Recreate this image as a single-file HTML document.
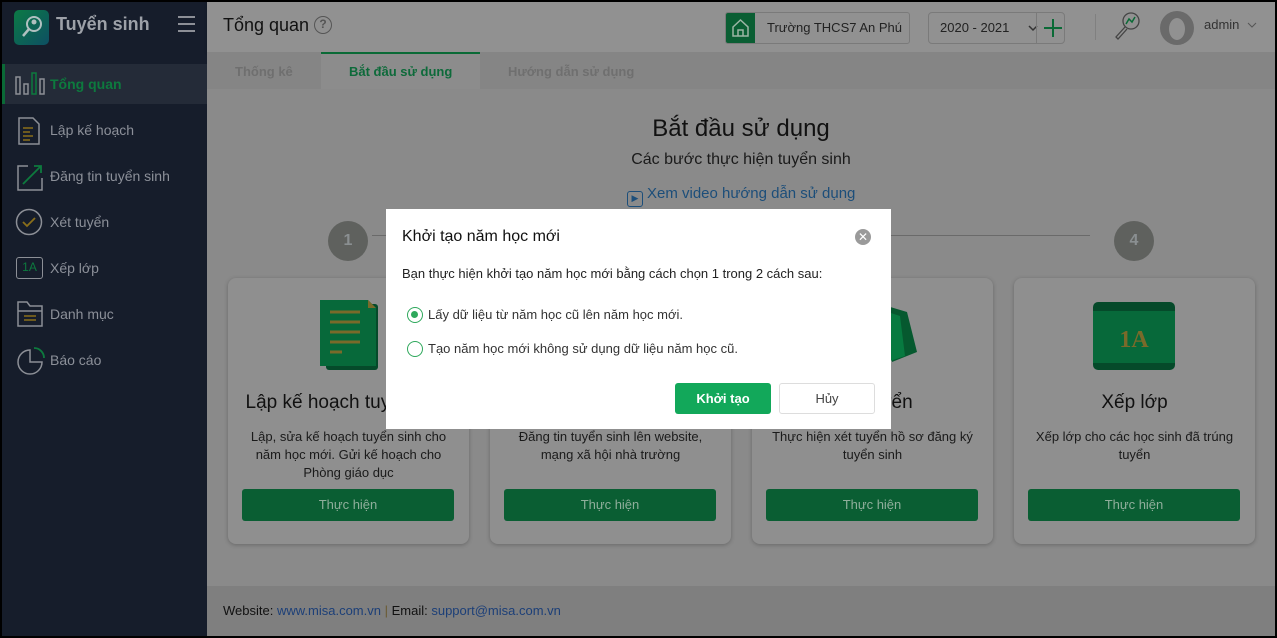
<!DOCTYPE html>
<html><head><meta charset="utf-8"><style>
*{box-sizing:border-box;margin:0;padding:0}
body{width:1277px;height:638px;overflow:hidden;font-family:"Liberation Sans","DejaVu Sans",sans-serif;background:#000;position:relative}
.abs{position:absolute}
#side{left:2px;top:2px;width:205px;height:634px;background:#161d2b}
#main{left:207px;top:2px;width:1068px;height:634px;background:#8a8a8a}
.nav{position:absolute;left:0;width:205px;height:46px;color:#8c9099;font-size:14px;display:flex;align-items:center}
.nav span{position:absolute;left:48px}
.card{position:absolute;top:276px;width:241px;height:266px;background:#8f8f8f;border-radius:8px;box-shadow:0 1px 4px rgba(0,0,0,.25);text-align:center}
.card h3{position:absolute;top:114px;left:0;right:0;font-weight:normal;font-size:19px;color:#111}
.card p{position:absolute;top:150px;left:15px;right:15px;font-size:13px;line-height:18px;color:#1a1a1a}
.btn{position:absolute;left:14px;right:15px;top:211px;height:32px;background:#0a5e33;border-radius:3px;color:#8fae9b;font-size:13px;line-height:32px}
.circ{position:absolute;top:219px;width:40px;height:40px;border-radius:50%;background:#5f615e;color:#8a8f91;font-size:16px;text-align:center;line-height:40px;font-weight:bold}
</style></head><body>
<div id="side" class="abs">
 <div class="abs" style="left:12px;top:8px;width:35px;height:35px;border-radius:5px;background:linear-gradient(135deg,#0c7a45,#0d4f63)">
  <svg width="35" height="35"><circle cx="20" cy="14" r="7" fill="none" stroke="#b0c0c0" stroke-width="2"/><circle cx="20" cy="12" r="2.5" fill="#b0c0c0"/><line x1="15" y1="19" x2="9" y2="26" stroke="#b0c0c0" stroke-width="2.5"/></svg>
 </div>
 <div class="abs" style="left:54px;top:12px;font-size:18px;color:#9da1a8;font-weight:bold">Tuyển sinh</div>
 <div class="abs" style="left:176px;top:14px;width:17px;height:16px;border-top:2px solid #8c8f96;border-bottom:2px solid #8c8f96"><div style="margin-top:5px;height:2px;background:#8c8f96"></div></div>
 <div class="nav" style="top:62px;height:40px;background:#242b38;border-left:3px solid #0a6a36">
  <svg class="abs" style="left:10px;top:8px" width="34" height="24"><g fill="none" stroke="#8c8f96" stroke-width="1.5"><rect x="1" y="5" width="4" height="17"/><rect x="9" y="12" width="4" height="10"/><rect x="25" y="7" width="4" height="15"/></g><rect x="17" y="1" width="4" height="21" fill="none" stroke="#0d7a3e" stroke-width="1.5"/></svg>
  <span style="left:45px;color:#0d7a3e;font-weight:bold">Tổng quan</span></div>
 <div class="nav" style="top:105px"><svg class="abs" style="left:15px;top:10px" width="24" height="28"><path d="M2 1h14l6 6v20H2z" fill="none" stroke="#8c8f96" stroke-width="1.5"/><path d="M6 11h10M6 15h7M6 19h10M6 23h7" stroke="#8a6f1a" stroke-width="1.5"/></svg><span>Lập kế hoạch</span></div>
 <div class="nav" style="top:151px"><svg class="abs" style="left:14px;top:10px" width="28" height="28"><path d="M12 3H2v24h24V15" fill="none" stroke="#8c8f96" stroke-width="1.5"/><path d="M7 21L25 3M18 3h7v7" fill="none" stroke="#0d7a3e" stroke-width="1.8"/></svg><span>Đăng tin tuyển sinh</span></div>
 <div class="nav" style="top:197px"><svg class="abs" style="left:13px;top:9px" width="30" height="30"><circle cx="14" cy="14" r="12.5" fill="none" stroke="#8c8f96" stroke-width="1.5"/><path d="M8 14l4 4 8-8" fill="none" stroke="#8a6f1a" stroke-width="1.8"/></svg><span>Xét tuyển</span></div>
 <div class="nav" style="top:243px"><div class="abs" style="left:14px;top:12px;width:27px;height:22px;border:1.5px solid #8c8f96;border-radius:3px;color:#0d7a3e;font-size:12px;text-align:center;line-height:19px">1A</div><span>Xếp lớp</span></div>
 <div class="nav" style="top:289px"><svg class="abs" style="left:15px;top:10px" width="26" height="26"><path d="M1 1h9l3 4h12v20H1z" fill="none" stroke="#8c8f96" stroke-width="1.5"/><path d="M1 10h24" stroke="#8c8f96" stroke-width="1.5"/><path d="M7 15h12M7 19h12" stroke="#8a6f1a" stroke-width="1.6"/></svg><span>Danh mục</span></div>
 <div class="nav" style="top:335px"><svg class="abs" style="left:15px;top:10px" width="28" height="28"><path d="M13 3a12 12 0 1 0 12 12H13z" fill="none" stroke="#8c8f96" stroke-width="1.5"/><path d="M17 1a10 10 0 0 1 10 10" fill="none" stroke="#0d7a3e" stroke-width="1.8"/></svg><span>Báo cáo</span></div>
</div>
<div id="main" class="abs">
 <div class="abs" style="left:0;top:0;width:1068px;height:50px;background:#919191;box-shadow:0 1px 3px rgba(0,0,0,.15)">
  <div class="abs" style="left:16px;top:13px;font-size:18px;color:#111">Tổng quan</div>
  <div class="abs" style="left:107px;top:14px;width:18px;height:18px;border:1.5px solid #555;border-radius:50%;font-size:12px;text-align:center;line-height:15px;color:#555;font-weight:bold">?</div>
  <div class="abs" style="left:518px;top:10px;width:185px;height:32px;border:1px solid #7a7a7a;border-radius:3px;overflow:hidden">
   <div style="position:absolute;left:0;top:0;width:29px;height:32px;background:#0a5e33"><svg width="29" height="30"><path d="M7 14l7.5-7 7.5 7v9H7z M12 23v-6h5v6" fill="none" stroke="#9cb5a5" stroke-width="1.5"/></svg></div>
   <div style="position:absolute;left:41px;top:7px;font-size:13px;color:#222">Trường THCS7 An Phú</div></div>
  <div class="abs" style="left:721px;top:10px;width:137px;height:32px;border:1px solid #7a7a7a;border-radius:4px">
   <div style="position:absolute;left:11px;top:7px;font-size:13px;color:#222">2020 - 2021</div>
   <svg style="position:absolute;left:98px;top:10px" width="12" height="10"><path d="M2 3l4 4 4-4" fill="none" stroke="#333" stroke-width="1.5"/></svg>
   <div style="position:absolute;left:107px;top:0;width:1px;height:30px;background:#7a7a7a"></div>
   <svg style="position:absolute;left:114px;top:5px" width="20" height="20"><path d="M10 1v18M1 10h18" stroke="#0a6a36" stroke-width="2"/></svg></div>
  <div class="abs" style="left:888px;top:12px;width:1px;height:26px;background:#808080"></div>
  <svg class="abs" style="left:905px;top:8px" width="30" height="32"><circle cx="19" cy="11" r="8" fill="none" stroke="#444" stroke-width="1.3"/><path d="M14 14l3-5 3 3 3-5" fill="none" stroke="#0a6a36" stroke-width="1.5"/><path d="M13 17l-9 10 2 2 9-10" fill="none" stroke="#444" stroke-width="1.3"/></svg>
  <div class="abs" style="left:953px;top:9px;width:34px;height:34px;border-radius:50%;background:#6a6a6a"><div style="margin:7px auto;width:16px;height:22px;border-radius:50%;background:#919191"></div></div>
  <div class="abs" style="left:997px;top:15px;font-size:13px;color:#333">admin</div>
  <svg class="abs" style="left:1039px;top:18px" width="12" height="10"><path d="M2 3l4 4 4-4" fill="none" stroke="#555" stroke-width="1"/></svg>
 </div>
 <div class="abs" style="left:0;top:50px;width:1068px;height:37px;background:#858585"></div>
 <div class="abs" style="left:114px;top:50px;width:159px;height:37px;background:#8c8c8c;border-top:2px solid #0a6a36"></div>
 <div class="abs" style="left:28px;top:62px;font-size:13px;color:#6f6f6f;font-weight:bold">Thống kê</div>
 <div class="abs" style="left:142px;top:62px;font-size:13px;color:#0d6a3a;font-weight:bold">Bắt đầu sử dụng</div>
 <div class="abs" style="left:301px;top:62px;font-size:13px;color:#6f6f6f;font-weight:bold">Hướng dẫn sử dụng</div>
 <div class="abs" style="left:0;top:113px;width:1068px;text-align:center;font-size:24px;color:#111">Bắt đầu sử dụng</div>
 <div class="abs" style="left:0;top:149px;width:1068px;text-align:center;font-size:16px;color:#1a1a1a">Các bước thực hiện tuyển sinh</div>
 <div class="abs" style="left:420px;top:183px;font-size:15px;color:#1c4e7a"><span style="display:inline-block;width:16px;height:16px;border:1.5px solid #1c4e7a;border-radius:3px;vertical-align:-3px;margin-right:4px;font-size:9px;text-align:center;line-height:13px">▶</span>Xem video hướng dẫn sử dụng</div>
 <div class="abs" style="left:165px;top:233px;width:718px;height:1px;background:#6a6a6a"></div>
 <div class="circ" style="left:121px">1</div>
 <div class="circ" style="left:907px">4</div>
 <div class="card" style="left:21px">
  <svg class="abs" style="left:92px;top:20px" width="60" height="76"><rect x="6" y="6" width="52" height="66" rx="3" fill="#054a2a"/><path d="M0 2h48l8 8v58H0z" fill="#07693a"/><path d="M48 2v8h8" fill="#7a6a2a"/><path d="M10 14h30M10 24h30M10 34h30M10 44h30M10 54h12" stroke="#7a6a2a" stroke-width="3"/></svg>
  <h3>Lập kế hoạch tuyển sinh</h3><p>Lập, sửa kế hoạch tuyển sinh cho năm học mới. Gửi kế hoạch cho Phòng giáo dục</p><div class="btn">Thực hiện</div></div>
 <div class="card" style="left:283px"><h3>Đăng tin tuyển sinh</h3><p>Đăng tin tuyển sinh lên website, mạng xã hội nhà trường</p><div class="btn">Thực hiện</div></div>
 <div class="card" style="left:545px">
  <svg class="abs" style="left:130px;top:28px" width="40" height="70"><path d="M5 0l20 6 10 40-25 10z" fill="#06592f"/><path d="M0 4l18 6 5 40-18 6z" fill="#077a40"/></svg>
  <h3>Xét tuyển</h3><p>Thực hiện xét tuyển hồ sơ đăng ký tuyển sinh</p><div class="btn">Thực hiện</div></div>
 <div class="card" style="left:807px">
  <svg class="abs" style="left:79px;top:24px" width="82" height="68"><rect width="82" height="68" rx="5" fill="#054a2a"/><rect y="9" width="82" height="52" fill="#07693a"/><text x="41" y="45" text-anchor="middle" font-family="Liberation Serif,serif" font-weight="bold" font-size="24" fill="#7a6a2a">1A</text></svg>
  <h3>Xếp lớp</h3><p>Xếp lớp cho các học sinh đã trúng tuyển</p><div class="btn">Thực hiện</div></div>
 <div class="abs" style="left:0;top:584px;width:1068px;height:50px;background:#7f7f7f"></div>
 <div class="abs" style="left:16px;top:601px;font-size:13px;color:#111">Website: <span style="color:#1c3f78">www.misa.com.vn</span> <span style="color:#6a5a30">|</span> Email: <span style="color:#1c3f78">support@misa.com.vn</span></div>
</div>
<div class="abs" style="left:386px;top:209px;width:505px;height:220px;background:#fff">
 <div class="abs" style="left:16px;top:19px;font-size:16px;color:#111">Khởi tạo năm học mới</div>
 <div class="abs" style="left:469px;top:20px;width:16px;height:16px;border-radius:50%;background:#9a9a9a;color:#fff;font-size:12px;text-align:center;line-height:16px;font-weight:bold">✕</div>
 <div class="abs" style="left:16px;top:57px;font-size:13px;color:#222">Bạn thực hiện khởi tạo năm học mới bằng cách chọn 1 trong 2 cách sau:</div>
 <div class="abs" style="left:21px;top:98px;width:16px;height:16px;border:1.5px solid #2fa85c;border-radius:50%"><div style="margin:3px;width:7px;height:7px;border-radius:50%;background:#2fa85c"></div></div>
 <div class="abs" style="left:42px;top:98px;font-size:13px;color:#333">Lấy dữ liệu từ năm học cũ lên năm học mới.</div>
 <div class="abs" style="left:21px;top:132px;width:16px;height:16px;border:1.5px solid #2fa85c;border-radius:50%"></div>
 <div class="abs" style="left:42px;top:132px;font-size:13px;color:#333">Tạo năm học mới không sử dụng dữ liệu năm học cũ.</div>
 <div class="abs" style="left:289px;top:174px;width:96px;height:31px;background:#12a85a;border-radius:3px;color:#fff;font-size:13px;text-align:center;line-height:31px;font-weight:bold">Khởi tạo</div>
 <div class="abs" style="left:393px;top:174px;width:96px;height:31px;border:1px solid #ddd;border-radius:3px;color:#444;font-size:13px;text-align:center;line-height:29px">Hủy</div>
</div>
</body></html>
